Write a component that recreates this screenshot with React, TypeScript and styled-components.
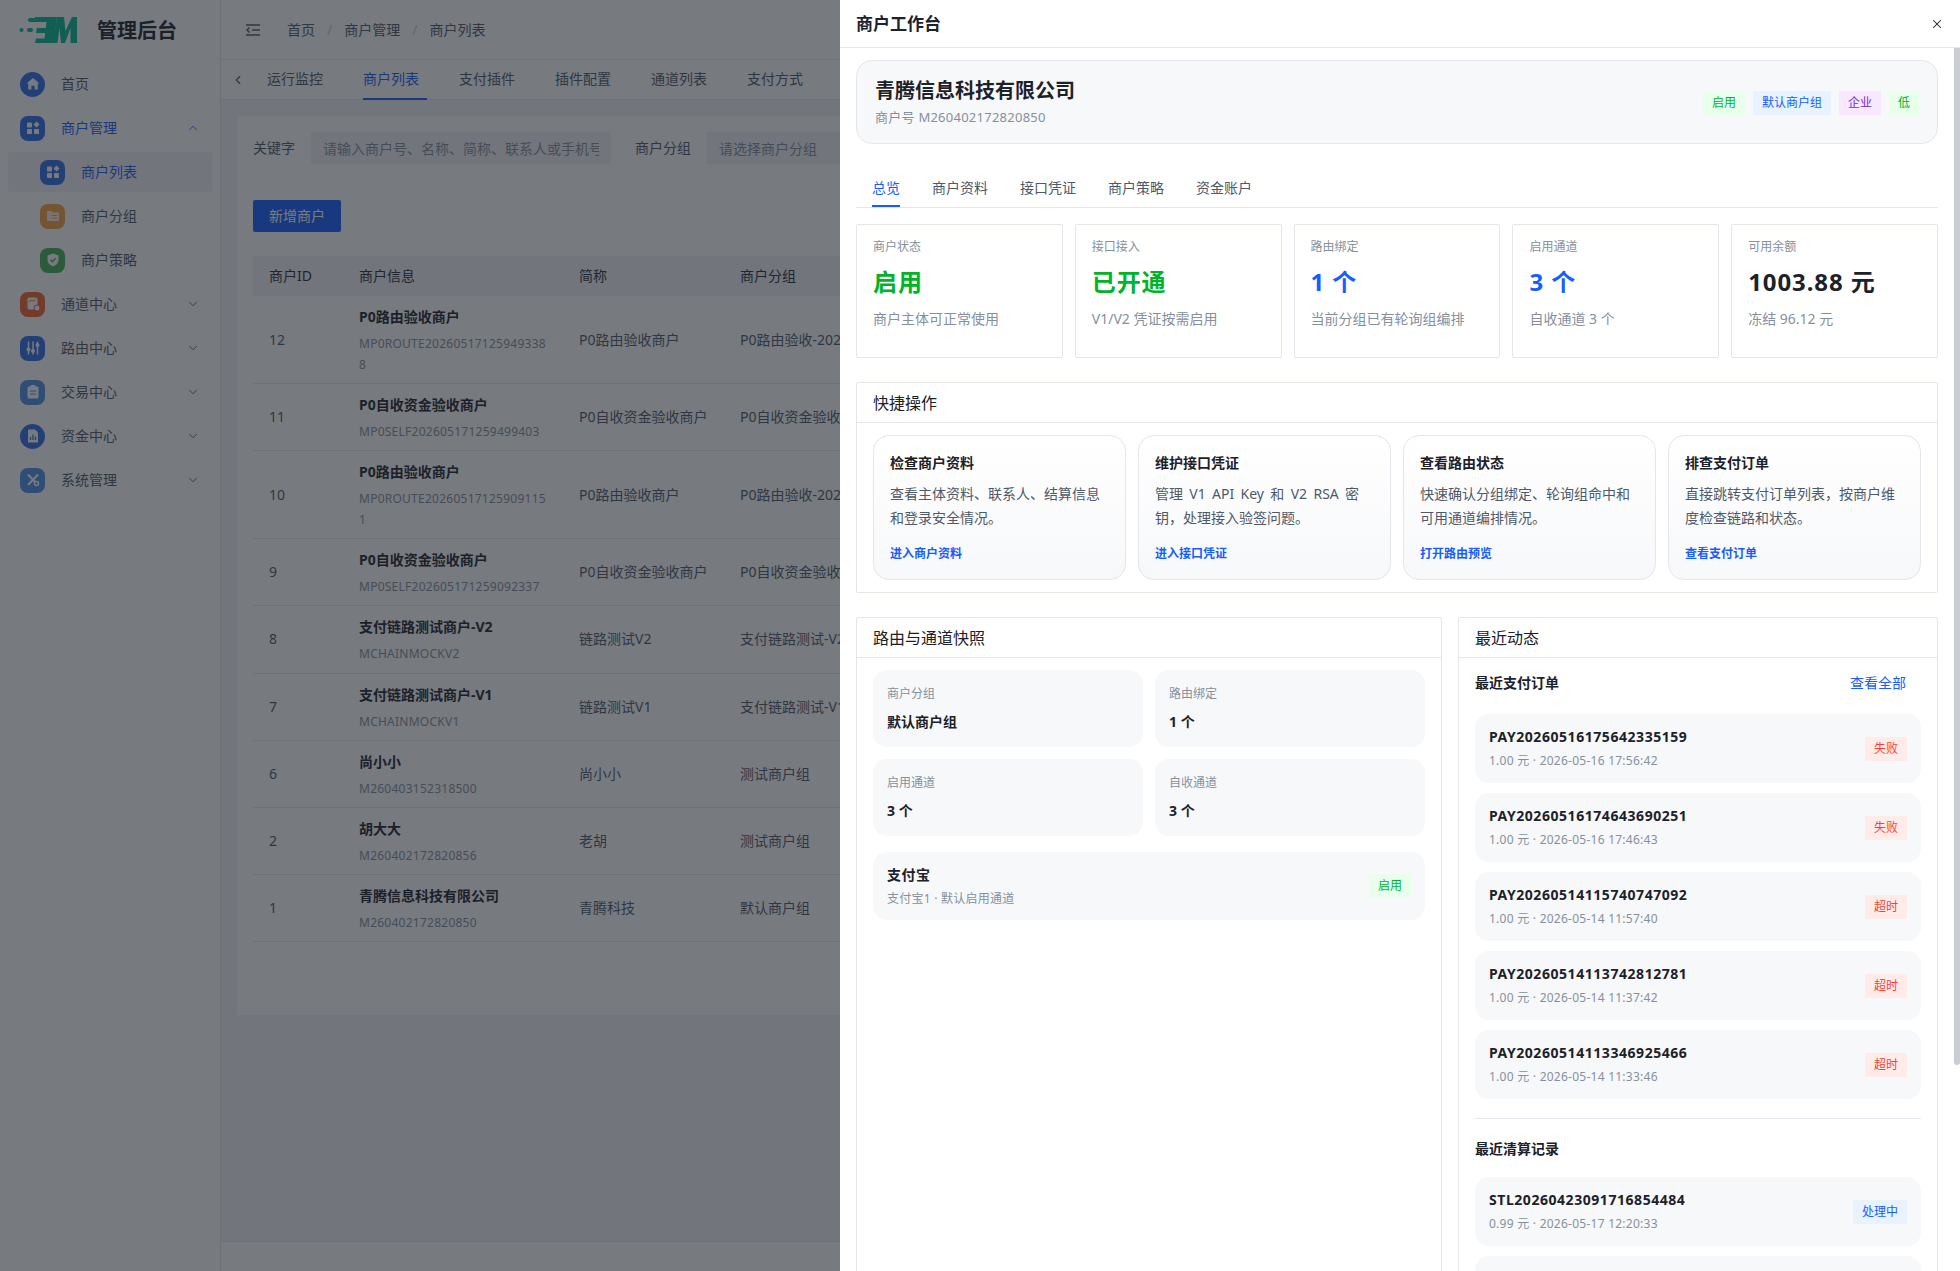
import React from 'react';
import styled, { createGlobalStyle } from 'styled-components';
import { ChevronDown, ChevronLeft, ChevronUp, X } from 'lucide-react';

const GlobalStyle = createGlobalStyle`
  html, body {
    margin: 0;
    height: 100%;
    overflow: hidden;
  }
  body {
    font-family: "Noto Sans", "Noto Sans CJK SC", sans-serif;
    font-size: 14px;
    line-height: 1.5715;
    color: #1d2129;
    background: #fff;
  }
  * {
    box-sizing: border-box;
  }
`;

const Shell = styled.div`
  display: flex;
  width: 1960px;
  height: 1271px;
  overflow: hidden;
`;

const Sidebar = styled.aside`
  flex: none;
  width: 221px;
  border-right: 1px solid #e5e6eb;
  background: #fff;
`;

const Brand = styled.div`
  display: flex;
  align-items: center;
  gap: 20px;
  height: 60px;
  padding-left: 19px;
`;

const BrandName = styled.span`
  margin-top: 2px;
  font-size: 20px;
  font-weight: 700;
`;

const Menu = styled.nav`
  display: flex;
  flex-direction: column;
  padding-top: 2px;
`;

const MenuItem = styled.div<{ $active?: boolean; $sub?: boolean; $selected?: boolean }>`
  display: flex;
  align-items: center;
  gap: 16px;
  height: ${p => (p.$sub ? '40px' : '44px')};
  margin: ${p => (p.$sub ? '2px 8px' : '0')};
  padding-left: ${p => (p.$sub ? '32px' : '20px')};
  padding-right: 20px;
  border-radius: 4px;
  color: ${p => (p.$active ? '#165dff' : '#4e5969')};
  background: ${p => (p.$selected ? '#f2f3f5' : 'transparent')};
`;

const Caret = styled.span`
  display: flex;
  margin-left: auto;
`;

const Glyph = styled.span<{ $bg: string; $round?: boolean }>`
  flex: none;
  display: grid;
  place-items: center;
  width: 25px;
  height: 25px;
  border-radius: ${p => (p.$round ? '50%' : '8px')};
  background: ${p => p.$bg};
  color: #fff;
`;

const Main = styled.main`
  flex: 1;
  min-width: 0;
  display: flex;
  flex-direction: column;
  background: #f2f3f5;
`;

const TopBar = styled.header`
  flex: none;
  display: flex;
  align-items: center;
  height: 60px;
  padding-left: 25px;
  border-bottom: 1px solid #e5e6eb;
  background: #fff;
  color: #4e5969;
`;

const Crumbs = styled.div`
  display: flex;
  gap: 12px;
  margin-left: 27px;
`;

const Slash = styled.span`
  color: #c9cdd4;
`;

const PageTabs = styled.div`
  flex: none;
  display: flex;
  align-items: center;
  height: 40px;
  padding-left: 10px;
  border-bottom: 1px solid #e5e6eb;
  background: #fff;
  color: #4e5969;
`;

const PageTabList = styled.div`
  display: flex;
  gap: 32px;
  margin-left: 22px;
`;

const PageTab = styled.div<{ $active?: boolean }>`
  height: 40px;
  padding-right: 8px;
  line-height: 38px;
  border-bottom: 2px solid ${p => (p.$active ? '#165dff' : 'transparent')};
  color: ${p => (p.$active ? '#165dff' : 'inherit')};
`;

const Content = styled.div`
  flex: 1;
  padding: 16px;
`;

const ListCard = styled.section`
  width: 1500px;
  height: 899px;
  padding: 16px;
  background: #fff;
`;

const FilterRow = styled.div`
  display: flex;
  align-items: center;
  color: #4e5969;
`;

const FilterLabel = styled.label`
  margin-right: 16px;
`;

const FilterInput = styled.input<{ $width: number }>`
  width: ${p => p.$width}px;
  height: 32px;
  margin-right: 24px;
  padding: 0 12px;
  border: 0;
  background: #f2f3f5;
  font: inherit;
  &::placeholder {
    color: #86909c;
  }
`;

const PrimaryButton = styled.button`
  display: block;
  width: 88px;
  height: 32px;
  margin: 36px 0 24px;
  border: 0;
  border-radius: 2px;
  background: #165dff;
  color: #fff;
  font: inherit;
`;

const TableRow = styled.div<{ $head?: boolean }>`
  display: grid;
  grid-template-columns: 90px 220px 161px 1fr;
  align-items: center;
  min-height: ${p => (p.$head ? '40px' : '67.2px')};
  background: ${p => (p.$head ? '#f2f3f5' : 'transparent')};
  color: ${p => (p.$head ? '#272e3b' : '#4e5969')};
  border-bottom: ${p => (p.$head ? '0' : '1px solid #e5e6eb')};
`;

const Cell = styled.div`
  padding: 0 16px;
  white-space: nowrap;
`;

const InfoCell = styled.div`
  padding: 10px 16px 8px;
`;

const InfoName = styled.div`
  line-height: 22px;
  font-weight: 700;
  color: #1d2129;
`;

const InfoCode = styled.div`
  margin-top: 5px;
  line-height: 21px;
  font-size: 12px;
  letter-spacing: 0.25px;
  color: #86909c;
  word-break: break-all;
`;

const FooterBar = styled.footer`
  flex: none;
  height: 30px;
  border-top: 1px solid #e5e6eb;
  background: #fff;
`;

const Mask = styled.div`
  position: fixed;
  inset: 0;
  background: rgba(29, 33, 41, 0.6);
`;

const Drawer = styled.aside`
  position: fixed;
  top: 0;
  right: 0;
  display: flex;
  flex-direction: column;
  width: 1120px;
  height: 100vh;
  background: #fff;
`;

const DrawerHeader = styled.div`
  flex: none;
  display: flex;
  align-items: center;
  justify-content: space-between;
  height: 48px;
  padding: 0 16px;
  border-bottom: 1px solid #e5e6eb;
`;

const DrawerTitle = styled.span`
  margin-top: 2px;
  font-size: 17px;
  font-weight: 700;
`;

const DrawerBody = styled.div`
  flex: 1;
  min-height: 0;
  overflow: hidden;
  padding: 12px 22px 0 16px;
`;

const ScrollThumb = styled.div`
  position: absolute;
  top: 48px;
  right: 0;
  width: 6px;
  height: 1017px;
  border-radius: 0 0 3px 3px;
  background: #c9cdd4;
`;

const Hero = styled.div`
  display: flex;
  align-items: center;
  justify-content: space-between;
  height: 84px;
  padding: 0 18px 0 18px;
  border: 1px solid #e5e6eb;
  border-radius: 16px;
  background: #f7f8fa;
`;

const HeroName = styled.div`
  line-height: 30px;
  font-size: 20px;
  font-weight: 700;
`;

const HeroCode = styled.div`
  line-height: 22px;
  font-size: 13px;
  letter-spacing: 0.25px;
  color: #86909c;
`;

const TagRow = styled.div`
  display: flex;
  gap: 8px;
  margin-top: 1px;
`;

const tagColors = {
  green: ['#e8ffea', '#00b42a'],
  blue: ['#e8f3ff', '#165dff'],
  purple: ['#f5e8ff', '#722ed1'],
  red: ['#ffece8', '#f53f3f'],
};

type TagColor = keyof typeof tagColors;

const Tag = styled.span<{ $color: TagColor }>`
  flex: none;
  height: 24px;
  padding: 0 9px;
  line-height: 24px;
  font-size: 12px;
  background: ${p => tagColors[p.$color][0]};
  color: ${p => tagColors[p.$color][1]};
`;

const TabStrip = styled.div`
  display: flex;
  gap: 32px;
  height: 48px;
  margin: 16px 0;
  padding: 17px 16px 0;
  border-bottom: 1px solid #e5e6eb;
  color: #4e5969;
`;

const TabItem = styled.div<{ $active?: boolean }>`
  height: 30px;
  line-height: 22px;
  border-bottom: 2px solid ${p => (p.$active ? '#165dff' : 'transparent')};
  color: ${p => (p.$active ? '#165dff' : 'inherit')};
`;

const StatGrid = styled.div`
  display: grid;
  grid-template-columns: repeat(5, 1fr);
  gap: 12px;
`;

const StatCard = styled.div`
  height: 134px;
  padding: 12px 16px;
  border: 1px solid #e5e6eb;
  border-radius: 2px;
`;

const StatLabel = styled.div`
  line-height: 20px;
  font-size: 12px;
  color: #86909c;
`;

const StatValue = styled.div<{ $color: string }>`
  margin-top: 9px;
  line-height: 32px;
  font-size: 24px;
  font-weight: 700;
  letter-spacing: 0.9px;
  color: ${p => p.$color};
`;

const StatNote = styled.div`
  margin-top: 10px;
  line-height: 22px;
  color: #86909c;
`;

const Panel = styled.section`
  border: 1px solid #e5e6eb;
  border-radius: 2px;
`;

const PanelTitle = styled.div`
  height: 40px;
  padding: 0 16px;
  line-height: 40px;
  font-size: 16px;
  border-bottom: 1px solid #e5e6eb;
`;

const QuickPanel = styled(Panel)`
  margin: 24px 0;
`;

const QuickGrid = styled.div`
  display: grid;
  grid-template-columns: repeat(4, 1fr);
  gap: 12px;
  padding: 12px 16px;
`;

const QuickCard = styled.div`
  height: 145px;
  padding: 16px;
  border: 1px solid #e5e6eb;
  border-radius: 16px;
  background: linear-gradient(180deg, #fff 0%, #f7f8fa 100%);
`;

const QuickName = styled.div`
  line-height: 22px;
  font-weight: 700;
`;

const QuickText = styled.div<{ $latin?: boolean }>`
  margin-top: 8px;
  line-height: 24px;
  word-spacing: ${p => (p.$latin ? '2.7px' : '0')};
  color: #4e5969;
`;

const QuickLink = styled.div`
  margin-top: 13px;
  line-height: 22px;
  font-size: 12px;
  font-weight: 700;
  color: #165dff;
`;

const SplitGrid = styled.div`
  display: grid;
  grid-template-columns: 586px 1fr;
  gap: 16px;
`;

const PanelBody = styled.div`
  padding: 12px 16px;
`;

const TileGrid = styled.div`
  display: grid;
  grid-template-columns: 1fr 1fr;
  gap: 12px;
  margin-bottom: 16px;
`;

const Tile = styled.div`
  padding: 14px;
  border-radius: 14px;
  background: #f7f8fa;
`;

const TileLabel = styled.div`
  line-height: 20px;
  font-size: 12px;
  color: #86909c;
`;

const TileValue = styled.div`
  margin-top: 7px;
  line-height: 22px;
  font-weight: 700;
`;

const ListRow = styled.div<{ $height: number }>`
  display: flex;
  align-items: center;
  justify-content: space-between;
  height: ${p => p.$height}px;
  margin-bottom: 10px;
  padding: 0 14px;
  border-radius: 14px;
  background: #f7f8fa;
`;

const RowName = styled.div`
  line-height: 22px;
  font-weight: 700;
  letter-spacing: 0.55px;
`;

const RowMeta = styled.div`
  margin-top: 3px;
  line-height: 20px;
  font-size: 12px;
  letter-spacing: 0.25px;
  color: #86909c;
`;

const SubHead = styled.div<{ $tight?: boolean }>`
  display: flex;
  align-items: center;
  justify-content: space-between;
  height: 32px;
  margin-bottom: ${p => (p.$tight ? '12px' : '15px')};
  padding-right: 15px;
  font-weight: 700;
`;

const SubLink = styled.span`
  font-weight: 400;
  color: #165dff;
`;

const Divider = styled.div`
  height: 1px;
  margin: 19px 0 14px;
  background: #e5e6eb;
`;

const ActivityBody = styled.div`
  padding: 9px 16px;
`;

const Logo = () => (
  <svg width="58" height="26" viewBox="0 0 58 26" fill="#00b896">
    <circle cx="2.5" cy="13" r="2" />
    <rect x="9" y="1" width="8" height="4" rx="2" />
    <rect x="8" y="11" width="6" height="4" rx="2" />
    <path d="M16 0h22l-3.500 26H16l1-4.500h8.500l.7-5.500H17l.8-5h9l.7-6H15z" />
    <path d="M34 26 38 0h7l1.500 14L53 0h5v26h-6.500V11L46 26h-4l-1.500-15L38.500 26z" />
  </svg>
);

const FoldIcon = () => (
  <svg width="14" height="12" viewBox="0 0 14 12" fill="none" stroke="#4e5969" strokeWidth="1.500">
    <path d="M0 1h14M6 6h8M0 11h14M3.500 3.500 1 6l2.500 2.500" />
  </svg>
);

const shapes: Record<string, React.ReactNode> = {
  home: <path fill="#fff" d="M8 2l6.500 5.600h-1.700v5.900H9.600V9.800H6.400v3.700H3.200V7.600H1.500z" />,
  grid: (
    <g fill="#fff">
      <rect x="2" y="2.500" width="5" height="5" rx="1" />
      <rect x="2" y="9" width="5" height="5" rx="1" />
      <rect x="9" y="9" width="5" height="5" rx="1" />
      <path d="M11.500 1.500l3 3-3 3-3-3z" />
    </g>
  ),
  folder: (
    <g>
      <path fill="#fff" opacity="0.85" d="M2 3h4.400l1.300 1.500H14V13H2z" />
      <path stroke="#f7a13c" strokeWidth="1" d="M6.500 7.500H12M6.500 10H12" />
    </g>
  ),
  shield: (
    <g>
      <path fill="#fff" d="M8 1.500l5.500 2v4.500c0 3-2.400 5.200-5.500 6.500-3.100-1.300-5.500-3.500-5.500-6.500V3.500z" />
      <path fill="none" stroke="#43b05a" strokeWidth="1.400" d="M5.500 7.800 7.400 9.700l3.200-3.400" />
    </g>
  ),
  channel: (
    <g>
      <rect x="2.500" y="1.500" width="10" height="12" rx="1.500" fill="#fff" />
      <path fill="none" stroke="#f4622a" strokeWidth="1" d="M4 6l2.500-2 1.500 1.500L10.500 3.500" />
      <circle cx="12" cy="12" r="3" fill="#fff" stroke="#f4622a" />
    </g>
  ),
  sliders: (
    <g stroke="#fff" strokeWidth="1.400" fill="#fff">
      <path d="M3.500 1.500v13M8 1.500v13M12.500 1.500v13" />
      <circle cx="3.500" cy="9.500" r="1.300" />
      <circle cx="8" cy="11" r="1.300" />
      <circle cx="12.500" cy="5" r="1.300" />
    </g>
  ),
  clipboard: (
    <g>
      <rect x="2.500" y="2.500" width="11" height="12" rx="1.500" fill="#fff" />
      <rect x="5.500" y="1" width="5" height="2.500" rx="0.800" fill="#fff" />
      <path stroke="#4f8fe6" strokeWidth="1.200" d="M5 7h6M5 10h6" />
    </g>
  ),
  report: (
    <g>
      <path fill="#fff" d="M3 1.500h7l3 3v10H3z" />
      <path stroke="#2f6fe8" strokeWidth="1.300" d="M5.500 12V9M8 12V6.500M10.500 12V8.500" />
    </g>
  ),
  tools: (
    <g fill="none" stroke="#fff" strokeWidth="2">
      <path d="M3 2.500 13 13M13 2.500 3 13" />
      <circle cx="11.500" cy="11.500" r="2" fill="#4f8fe6" strokeWidth="1.500" />
    </g>
  ),
};

const MenuGlyph = ({ name, bg, round }: { name: string; bg: string; round?: boolean }) => (
  <Glyph $bg={bg} $round={round}>
    <svg width="16" height="16" viewBox="0 0 16 16">
      {shapes[name]}
    </svg>
  </Glyph>
);

const merchants = [
  { id: 12, name: 'P0路由验收商户', code: 'MP0ROUTE202605171259493388', short: 'P0路由验收商户', group: 'P0路由验收-20260517' },
  { id: 11, name: 'P0自收资金验收商户', code: 'MP0SELF202605171259499403', short: 'P0自收资金验收商户', group: 'P0自收资金验收-2026' },
  { id: 10, name: 'P0路由验收商户', code: 'MP0ROUTE202605171259091151', short: 'P0路由验收商户', group: 'P0路由验收-20260517' },
  { id: 9, name: 'P0自收资金验收商户', code: 'MP0SELF202605171259092337', short: 'P0自收资金验收商户', group: 'P0自收资金验收-2026' },
  { id: 8, name: '支付链路测试商户-V2', code: 'MCHAINMOCKV2', short: '链路测试V2', group: '支付链路测试-V2' },
  { id: 7, name: '支付链路测试商户-V1', code: 'MCHAINMOCKV1', short: '链路测试V1', group: '支付链路测试-V1' },
  { id: 6, name: '尚小小', code: 'M260403152318500', short: '尚小小', group: '测试商户组' },
  { id: 2, name: '胡大大', code: 'M260402172820856', short: '老胡', group: '测试商户组' },
  { id: 1, name: '青腾信息科技有限公司', code: 'M260402172820850', short: '青腾科技', group: '默认商户组' },
];

const stats = [
  { label: '商户状态', value: '启用', color: '#00b42a', note: '商户主体可正常使用' },
  { label: '接口接入', value: '已开通', color: '#00b42a', note: 'V1/V2 凭证按需启用' },
  { label: '路由绑定', value: '1 个', color: '#165dff', note: '当前分组已有轮询组编排' },
  { label: '启用通道', value: '3 个', color: '#165dff', note: '自收通道 3 个' },
  { label: '可用余额', value: '1003.88 元', color: '#1d2129', note: '冻结 96.12 元' },
];

const quickActions = [
  { name: '检查商户资料', text: '查看主体资料、联系人、结算信息和登录安全情况。', link: '进入商户资料' },
  { name: '维护接口凭证', text: '管理 V1 API Key 和 V2 RSA 密钥，处理接入验签问题。', link: '进入接口凭证', latin: true },
  { name: '查看路由状态', text: '快速确认分组绑定、轮询组命中和可用通道编排情况。', link: '打开路由预览' },
  { name: '排查支付订单', text: '直接跳转支付订单列表，按商户维度检查链路和状态。', link: '查看支付订单' },
];

const tiles = [
  { label: '商户分组', value: '默认商户组' },
  { label: '路由绑定', value: '1 个' },
  { label: '启用通道', value: '3 个' },
  { label: '自收通道', value: '3 个' },
];

const orders: { id: string; meta: string; status: string }[] = [
  { id: 'PAY20260516175642335159', meta: '1.00 元 · 2026-05-16 17:56:42', status: '失败' },
  { id: 'PAY20260516174643690251', meta: '1.00 元 · 2026-05-16 17:46:43', status: '失败' },
  { id: 'PAY20260514115740747092', meta: '1.00 元 · 2026-05-14 11:57:40', status: '超时' },
  { id: 'PAY20260514113742812781', meta: '1.00 元 · 2026-05-14 11:37:42', status: '超时' },
  { id: 'PAY20260514113346925466', meta: '1.00 元 · 2026-05-14 11:33:46', status: '超时' },
];

export default function App() {
  return (
    <>
      <GlobalStyle />
      <Shell>
        <Sidebar>
          <Brand>
            <Logo />
            <BrandName>管理后台</BrandName>
          </Brand>
          <Menu>
            <MenuItem>
              <MenuGlyph name="home" bg="#2f6fe8" round />
              首页
            </MenuItem>
            <MenuItem $active>
              <MenuGlyph name="grid" bg="#2f6fe8" />
              商户管理
              <Caret>
                <ChevronUp size={14} strokeWidth={1.500} />
              </Caret>
            </MenuItem>
            <MenuItem $sub $selected $active>
              <MenuGlyph name="grid" bg="#2f6fe8" />
              商户列表
            </MenuItem>
            <MenuItem $sub>
              <MenuGlyph name="folder" bg="#f7a13c" />
              商户分组
            </MenuItem>
            <MenuItem $sub>
              <MenuGlyph name="shield" bg="#43b05a" />
              商户策略
            </MenuItem>
            {[
              ['channel', '#f4622a', '通道中心'],
              ['sliders', '#2f6fe8', '路由中心'],
              ['clipboard', '#4f8fe6', '交易中心'],
              ['report', '#2f6fe8', '资金中心'],
              ['tools', '#4f8fe6', '系统管理'],
            ].map(([icon, bg, label]) => (
              <MenuItem key={label}>
                <MenuGlyph name={icon} bg={bg} round={icon === 'report'} />
                {label}
                <Caret>
                  <ChevronDown size={14} strokeWidth={1.500} />
                </Caret>
              </MenuItem>
            ))}
          </Menu>
        </Sidebar>
        <Main>
          <TopBar>
            <FoldIcon />
            <Crumbs>
              首页
              <Slash>/</Slash>
              商户管理
              <Slash>/</Slash>
              商户列表
            </Crumbs>
          </TopBar>
          <PageTabs>
            <ChevronLeft size={14} />
            <PageTabList>
              <PageTab>运行监控</PageTab>
              <PageTab $active>商户列表</PageTab>
              <PageTab>支付插件</PageTab>
              <PageTab>插件配置</PageTab>
              <PageTab>通道列表</PageTab>
              <PageTab>支付方式</PageTab>
            </PageTabList>
          </PageTabs>
          <Content>
            <ListCard>
              <FilterRow>
                <FilterLabel>关键字</FilterLabel>
                <FilterInput $width={300} placeholder="请输入商户号、名称、简称、联系人或手机号" />
                <FilterLabel>商户分组</FilterLabel>
                <FilterInput $width={300} placeholder="请选择商户分组" />
              </FilterRow>
              <PrimaryButton>新增商户</PrimaryButton>
              <TableRow $head>
                <Cell>商户ID</Cell>
                <Cell>商户信息</Cell>
                <Cell>简称</Cell>
                <Cell>商户分组</Cell>
              </TableRow>
              {merchants.map(m => (
                <TableRow key={m.id}>
                  <Cell>{m.id}</Cell>
                  <InfoCell>
                    <InfoName>{m.name}</InfoName>
                    <InfoCode>{m.code}</InfoCode>
                  </InfoCell>
                  <Cell>{m.short}</Cell>
                  <Cell>{m.group}</Cell>
                </TableRow>
              ))}
            </ListCard>
          </Content>
          <FooterBar />
        </Main>
      </Shell>
      <Mask />
      <Drawer>
        <DrawerHeader>
          <DrawerTitle>商户工作台</DrawerTitle>
          <X size={14} strokeWidth={1.800} />
        </DrawerHeader>
        <DrawerBody>
          <Hero>
            <div>
              <HeroName>青腾信息科技有限公司</HeroName>
              <HeroCode>商户号 M260402172820850</HeroCode>
            </div>
            <TagRow>
              <Tag $color="green">启用</Tag>
              <Tag $color="blue">默认商户组</Tag>
              <Tag $color="purple">企业</Tag>
              <Tag $color="green">低</Tag>
            </TagRow>
          </Hero>
          <TabStrip>
            <TabItem $active>总览</TabItem>
            <TabItem>商户资料</TabItem>
            <TabItem>接口凭证</TabItem>
            <TabItem>商户策略</TabItem>
            <TabItem>资金账户</TabItem>
          </TabStrip>
          <StatGrid>
            {stats.map(s => (
              <StatCard key={s.label}>
                <StatLabel>{s.label}</StatLabel>
                <StatValue $color={s.color}>{s.value}</StatValue>
                <StatNote>{s.note}</StatNote>
              </StatCard>
            ))}
          </StatGrid>
          <QuickPanel>
            <PanelTitle>快捷操作</PanelTitle>
            <QuickGrid>
              {quickActions.map(a => (
                <QuickCard key={a.name}>
                  <QuickName>{a.name}</QuickName>
                  <QuickText $latin={a.latin}>{a.text}</QuickText>
                  <QuickLink>{a.link}</QuickLink>
                </QuickCard>
              ))}
            </QuickGrid>
          </QuickPanel>
          <SplitGrid>
            <Panel>
              <PanelTitle>路由与通道快照</PanelTitle>
              <PanelBody>
                <TileGrid>
                  {tiles.map(t => (
                    <Tile key={t.label}>
                      <TileLabel>{t.label}</TileLabel>
                      <TileValue>{t.value}</TileValue>
                    </Tile>
                  ))}
                </TileGrid>
                <ListRow $height={68}>
                  <div>
                    <RowName>支付宝</RowName>
                    <RowMeta>支付宝1 · 默认启用通道</RowMeta>
                  </div>
                  <Tag $color="green">启用</Tag>
                </ListRow>
              </PanelBody>
            </Panel>
            <Panel>
              <PanelTitle>最近动态</PanelTitle>
              <ActivityBody>
                <SubHead>
                  最近支付订单
                  <SubLink>查看全部</SubLink>
                </SubHead>
                {orders.map(o => (
                  <ListRow key={o.id} $height={69}>
                    <div>
                      <RowName>{o.id}</RowName>
                      <RowMeta>{o.meta}</RowMeta>
                    </div>
                    <Tag $color="red">{o.status}</Tag>
                  </ListRow>
                ))}
                <Divider />
                <SubHead $tight>最近清算记录</SubHead>
                <ListRow $height={69}>
                  <div>
                    <RowName>STL20260423091716854484</RowName>
                    <RowMeta>0.99 元 · 2026-05-17 12:20:33</RowMeta>
                  </div>
                  <Tag $color="blue">处理中</Tag>
                </ListRow>
                <ListRow $height={69} />
              </ActivityBody>
            </Panel>
          </SplitGrid>
        </DrawerBody>
        <ScrollThumb />
      </Drawer>
    </>
  );
}
